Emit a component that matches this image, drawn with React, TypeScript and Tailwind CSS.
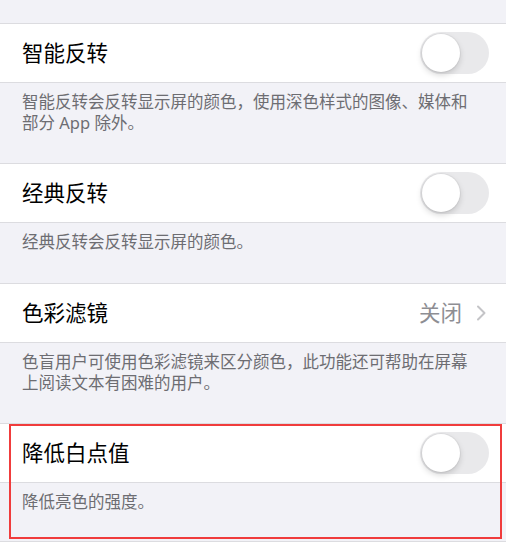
const FONT = { fontFamily: '"Noto Sans", "Noto Sans CJK SC", sans-serif' };

function Toggle() {
  return (
    <div className="relative h-[42px] w-[69px] rounded-full bg-[#e9e9eb]">
      <div className="absolute left-[2px] top-[2px] h-[38px] w-[38px] rounded-full bg-white shadow-[0_3px_6px_rgba(0,0,0,0.16),0_0_0_1px_rgba(0,0,0,0.04)]" />
    </div>
  );
}

function Chevron() {
  return (
    <svg width="10" height="16" viewBox="0 0 10 16" fill="none">
      <path d="M2 1.5 L8.5 8 L2 14.5" stroke="#c4c4c7" strokeWidth="2" strokeLinecap="round" strokeLinejoin="round" />
    </svg>
  );
}

function Row({ title, right }: { title: string; right: React.ReactNode }) {
  return (
    <div className="flex h-[60px] items-center justify-between border-y border-[#dcdce0] bg-white pl-[22px] pr-[17px]">
      <span className="text-[21.5px] leading-none text-black">{title}</span>
      {right}
    </div>
  );
}

function Footer({ lines, h }: { lines: string[]; h: string }) {
  return (
    <div className={`${h} px-[22px] pt-[8px] text-[16.5px] leading-[21px] text-[#6d6d72]`}>
      {lines.map((l) => (
        <div key={l}>{l}</div>
      ))}
    </div>
  );
}

export default function App() {
  return (
    <div className="min-h-[545px] overflow-hidden bg-[#f2f2f7]" style={FONT}>
      <div className="h-[23px]" />

      <Row title="智能反转" right={<Toggle />} />
      <Footer h="h-[80px]" lines={['智能反转会反转显示屏的颜色，使用深色样式的图像、媒体和', '部分 App 除外。']} />

      <Row title="经典反转" right={<Toggle />} />
      <Footer h="h-[60px]" lines={['经典反转会反转显示屏的颜色。']} />

      <Row
        title="色彩滤镜"
        right={
          <div className="flex items-center gap-[14px] pr-[3px]">
            <span className="text-[21.5px] leading-none text-[#8e8e93]">关闭</span>
            <Chevron />
          </div>
        }
      />
      <Footer h="h-[80px]" lines={['色盲用户可使用色彩滤镜来区分颜色，此功能还可帮助在屏幕', '上阅读文本有困难的用户。']} />

      <div className="relative">
        <Row title="降低白点值" right={<Toggle />} />
        <Footer h="h-[58px]" lines={['降低亮色的强度。']} />
        {/* annotation box */}
        <div className="pointer-events-none absolute left-[9px] right-[4px] top-[1px] bottom-[2px] border-2 border-[#f03c3c]" />
      </div>

      <div className="h-[10px] border-t border-[#dcdce0] bg-white" />
    </div>
  );
}
